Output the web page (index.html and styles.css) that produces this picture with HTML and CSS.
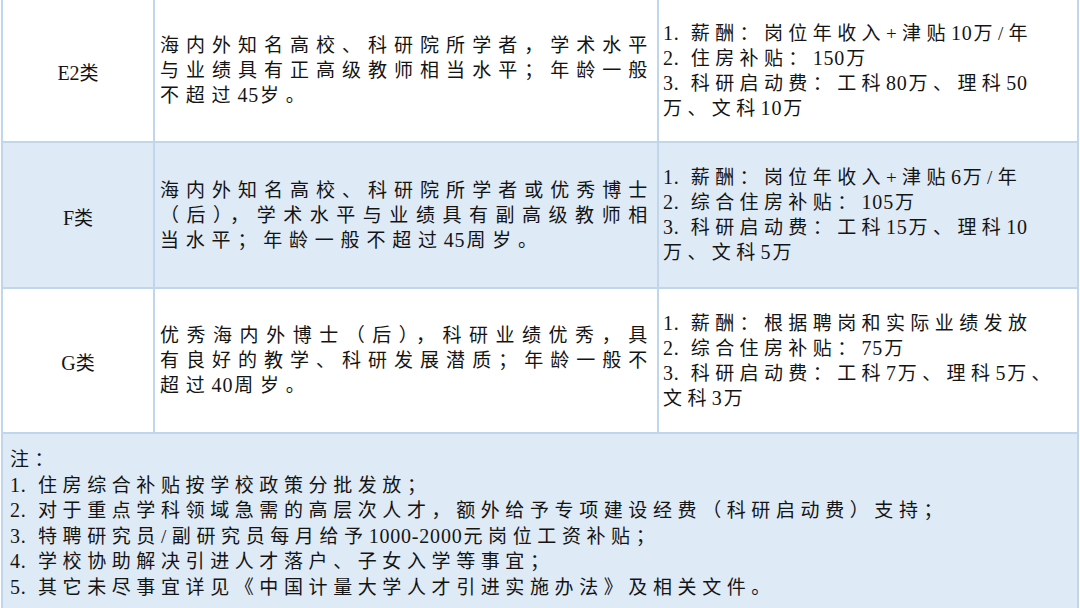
FILE: index.html
```html
<!DOCTYPE html>
<html lang="zh-CN">
<head>
<meta charset="utf-8">
<title>人才引进待遇</title>
<link rel="stylesheet" href="styles.css">
</head>
<body>
<div class="table">
  <div class="cell cat"><span class="label"><span class="n">E2</span>类</span></div>
  <div class="cell desc"><p>海内外知名高校、科研院所学者，学术水平与业绩具有正高级教师相当水平；年龄一般不超过<span class="n">45</span>岁。</p></div>
  <div class="cell benefit">
    <div class="line"><span class="n">1.</span> 薪酬：岗位年收入+津贴<span class="n">10</span>万/年</div>
    <div class="line"><span class="n">2.</span> 住房补贴：<span class="n">150</span>万</div>
    <div class="line"><span class="n">3.</span> 科研启动费：工科<span class="n">80</span>万、理科<span class="n">50</span><br>万、文科<span class="n">10</span>万</div>
  </div>

  <div class="cell cat alt"><span class="label"><span class="n">F</span>类</span></div>
  <div class="cell desc alt"><p>海内外知名高校、科研院所学者或优秀博士（后），学术水平与业绩具有副高级教师相当水平；年龄一般不超过<span class="n">45</span>周岁。</p></div>
  <div class="cell benefit alt">
    <div class="line"><span class="n">1.</span> 薪酬：岗位年收入+津贴<span class="n">6</span>万/年</div>
    <div class="line"><span class="n">2.</span> 综合住房补贴：<span class="n">105</span>万</div>
    <div class="line"><span class="n">3.</span> 科研启动费：工科<span class="n">15</span>万、理科<span class="n">10</span><br>万、文科<span class="n">5</span>万</div>
  </div>

  <div class="cell cat"><span class="label"><span class="n">G</span>类</span></div>
  <div class="cell desc"><p>优秀海内外博士（后），科研业绩优秀，具有良好的教学、科研发展潜质；年龄一般不超过<span class="n">40</span>周岁。</p></div>
  <div class="cell benefit">
    <div class="line"><span class="n">1.</span> 薪酬：根据聘岗和实际业绩发放</div>
    <div class="line"><span class="n">2.</span> 综合住房补贴：<span class="n">75</span>万</div>
    <div class="line"><span class="n">3.</span> 科研启动费：工科<span class="n">7</span>万、理科<span class="n">5</span>万、<br>文科<span class="n">3</span>万</div>
  </div>

  <div class="cell note alt">
    <div class="line">注：</div>
    <div class="line"><span class="n">1.</span> 住房综合补贴按学校政策分批发放；</div>
    <div class="line"><span class="n">2.</span> 对于重点学科领域急需的高层次人才，额外给予专项建设经费（科研启动费）支持；</div>
    <div class="line"><span class="n">3.</span> 特聘研究员/副研究员每月给予<span class="n">1000-2000</span>元岗位工资补贴；</div>
    <div class="line"><span class="n">4.</span> 学校协助解决引进人才落户、子女入学等事宜；</div>
    <div class="line"><span class="n">5.</span> 其它未尽事宜详见《中国计量大学人才引进实施办法》及相关文件。</div>
  </div>
</div>
</body>
</html>
```

FILE: styles.css
```css
html, body {
  margin: 0;
  padding: 0;
  background: #ffffff;
}

body {
  font-family: "Liberation Serif", "Noto Sans CJK SC", serif;
  font-size: 19px;
  color: #141414;
  overflow: hidden;
}

.table {
  margin-left: 1px;
  width: 1078px;
  box-sizing: border-box;
  display: grid;
  grid-template-columns: 150px 502px 418px;
  grid-template-rows: 141px 144px 143px 180px;
  gap: 2px;
  padding: 0 2px 2px 2px;
  background: #bfd6ec;
}

.cell {
  background: #ffffff;
  display: flex;
  flex-direction: column;
  justify-content: center;
  box-sizing: border-box;
}

.cell.alt {
  background: #deeaf6;
}

.n {
  font-size: 20px;
  letter-spacing: 0.8px;
  padding-right: 1px;
}

.cat {
  align-items: center;
  padding-top: 2px;
}

.label {
  white-space: nowrap;
}

.cat .n {
  letter-spacing: 0;
  padding-right: 0;
}

.desc {
  padding: 0 3px 0 5px;
}

.desc p {
  margin: 0;
  line-height: 25px;
  letter-spacing: 6.8px;
  text-align: justify;
}

.benefit {
  padding: 0 4px 0 4px;
  line-height: 25px;
  letter-spacing: 5.4px;
}

.line {
  white-space: nowrap;
}

.note {
  grid-column: 1 / -1;
  justify-content: flex-start;
  padding: 14px 6px 0 7px;
  line-height: 24.6px;
  letter-spacing: 5.6px;
}
```
